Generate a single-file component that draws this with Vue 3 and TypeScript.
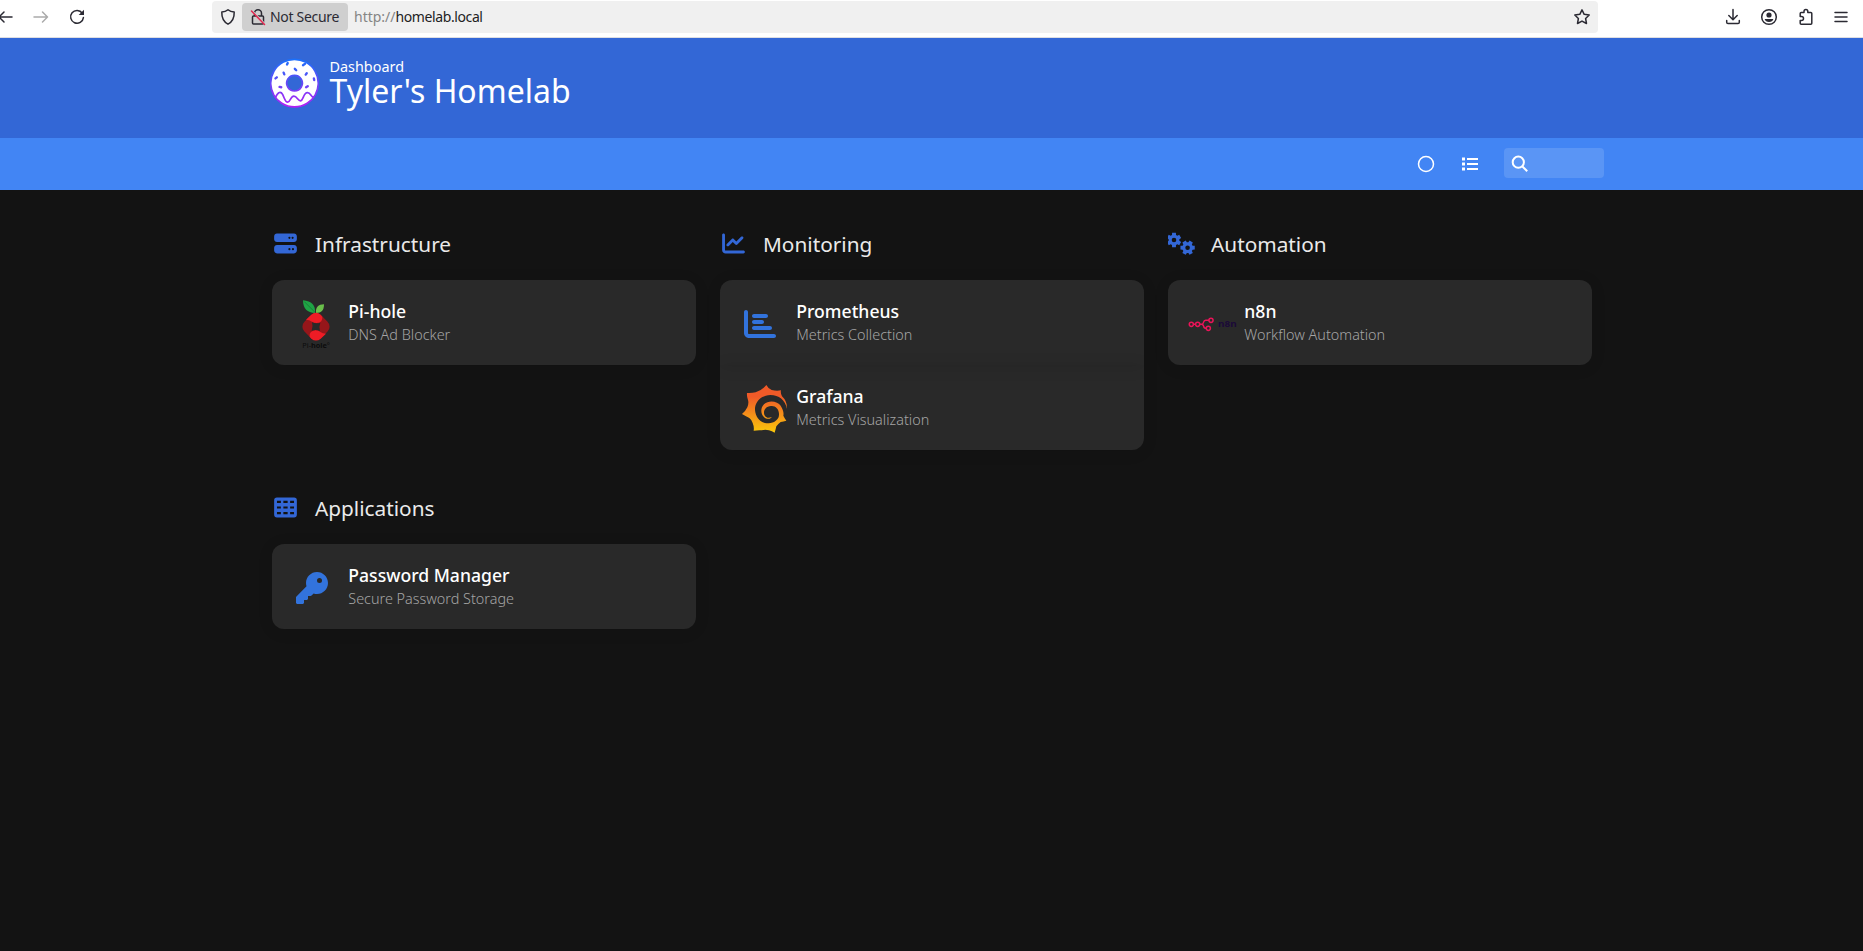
<script setup lang="ts">
interface Item {
  name: string
  subtitle: string
  icon: 'pihole' | 'bars' | 'grafana' | 'n8n' | 'key'
}
interface Group {
  title: string
  icon: 'server' | 'chart' | 'gears' | 'table'
  items: Item[]
}

const groups: Group[] = [
  { title: 'Infrastructure', icon: 'server', items: [{ name: 'Pi-hole', subtitle: 'DNS Ad Blocker', icon: 'pihole' }] },
  {
    title: 'Monitoring',
    icon: 'chart',
    items: [
      { name: 'Prometheus', subtitle: 'Metrics Collection', icon: 'bars' },
      { name: 'Grafana', subtitle: 'Metrics Visualization', icon: 'grafana' },
    ],
  },
  { title: 'Automation', icon: 'gears', items: [{ name: 'n8n', subtitle: 'Workflow Automation', icon: 'n8n' }] },
  { title: 'Applications', icon: 'table', items: [{ name: 'Password Manager', subtitle: 'Secure Password Storage', icon: 'key' }] },
]

function gear(cx: number, cy: number, offset: number): string {
  const points: string[] = []
  const at = (deg: number, r: number) => {
    const a = (deg * Math.PI) / 180
    points.push(`${(cx + r * Math.cos(a)).toFixed(2)} ${(cy + r * Math.sin(a)).toFixed(2)}`)
  }
  for (let i = 0; i < 6; i++) {
    const c = offset + i * 60
    at(c - 22, 5.4)
    at(c - 15, 7.4)
    at(c + 15, 7.4)
    at(c + 22, 5.4)
  }
  const hole = `M${cx - 2.3} ${cy}a2.3 2.3 0 1 0 4.6 0a2.3 2.3 0 1 0 -4.6 0z`
  return `M${points.join('L')}z${hole}`
}
const gearsPath = gear(6, 8, 30) + gear(19.6, 15.7, 0)
</script>

<template>
  <div class="page">
    <div class="browser">
      <svg class="back" width="13" height="20" viewBox="0 0 13 20"><path d="M12 10H-1M4 5L-1 10L4 15" /></svg>
      <svg class="forward" width="16" height="20" viewBox="0 0 16 20"><path d="M1 10H14.5M9.5 5L14.5 10L9.5 15" /></svg>
      <svg class="reload" width="18" height="20" viewBox="0 0 18 20"><path d="M14.3 6.2A6.4 6.4 0 1 0 15.4 10.6" /><path class="solid" d="M10.7 8H16V2.8z" /></svg>
      <div class="urlbar">
        <svg class="shield" width="16" height="18" viewBox="0 0 16 18"><path d="M8 1.8C6.3 3.3 4 4 1.8 4C1.6 9.5 3.3 13.6 8 16.2C12.7 13.6 14.4 9.5 14.2 4C12 4 9.7 3.3 8 1.8z" /></svg>
        <div class="chip">
          <svg width="16" height="18" viewBox="0 0 16 18"><path d="M4.5 8V5.3A3.5 3.5 0 0 1 11.5 5.3V8M3.5 8H12.5Q13.5 8 13.5 9V15Q13.5 16 12.5 16H3.5Q2.5 16 2.5 15V9Q2.5 8 3.5 8z" /><path class="halo" d="M2 2.5L15 16" /><path class="slash" d="M1.5 3L14.5 16.5" /></svg>
          <span class="chip-text">Not Secure</span>
        </div>
        <div class="url"><span class="scheme">http://</span><span class="host">homelab.local</span></div>
        <svg class="star" width="18" height="18" viewBox="0 0 18 18"><path d="M9 1.8L11.2 6.3L16.2 7L12.6 10.5L13.5 15.5L9 13.1L4.5 15.5L5.4 10.5L1.8 7L6.8 6.3z" /></svg>
      </div>
      <div class="tools">
        <svg width="16" height="18" viewBox="0 0 16 18"><path d="M8 1.5V11.5M3.8 7.5L8 11.7L12.2 7.5M1.7 12.5V14.2Q1.7 15.5 3 15.5H13Q14.3 15.5 14.3 14.2V12.5" /></svg>
        <svg width="18" height="18" viewBox="0 0 18 18"><circle cx="9" cy="9" r="7.3" /><circle class="solid" cx="9" cy="7" r="2.6" /><path class="solid" d="M4.6 11H13.4Q12.6 14 9 14Q5.4 14 4.6 11z" /></svg>
        <svg width="16" height="18" viewBox="0 0 16 18"><path d="M2.2 6.8V5.5Q2.2 4.5 3.2 4.5H6V3.4A1.9 1.9 0 0 1 9.8 3.4V4.5H12.8Q13.8 4.5 13.8 5.5V15.2Q13.8 16.2 12.8 16.2H3.2Q2.2 16.2 2.2 15.2V12.6H3.5A1.9 1.9 0 0 0 3.5 8.6H2.2z" /></svg>
        <svg class="menu" width="14" height="18" viewBox="0 0 14 18"><path d="M1 4.5H13M1 9H13M1 13.5H13" /></svg>
      </div>
    </div>

    <header class="banner">
      <div class="container banner-inner">
        <svg class="logo" width="49" height="51" viewBox="0 0 144 150">
          <defs>
            <linearGradient id="donut" x1="0" y1="0" x2="0" y2="150" gradientUnits="userSpaceOnUse"><stop offset="0" stop-color="#1672fb" /><stop offset="1" stop-color="#b81cf4" /></linearGradient>
          </defs>
          <g fill="none" stroke="url(#donut)" stroke-linecap="round">
            <path fill="#fff" fill-rule="evenodd" stroke-width="5" d="M72 4A70 70 0 1 1 71.9 4zM72 51A23 23 0 1 0 72.1 51z" />
            <path stroke-width="5" d="M16 116C24 98 32 98 37 107C45 124 45 130 52 130C60 130 60 112 70 112C80 112 82 127 90 126C98 125 98 102 110 102C120 102 121 116 128 115" />
            <path stroke-width="7" d="M52 15L50 19M97 21L103 17M73 32L77 36M40 43L42 48M105 49L108 45M16 60L20 57M129 60L130 65M28 85L33 86M106 86L111 83" />
          </g>
        </svg>
        <div class="heading">
          <span class="overline">Dashboard</span>
          <h1>Tyler's Homelab</h1>
        </div>
      </div>
    </header>

    <nav class="navbar">
      <div class="container nav-inner">
        <svg class="theme" width="18" height="18" viewBox="0 0 18 18"><circle cx="9" cy="9" r="7.5" /></svg>
        <svg class="list" width="18" height="18" viewBox="0 0 18 18"><path d="M6 4H17M6 9H17M6 14H17" /><path class="dots" d="M1 4H4M1 9H4M1 14H4" /></svg>
        <div class="search">
          <svg width="18" height="18" viewBox="0 0 18 18"><circle cx="7.3" cy="7.2" r="5.6" /><path d="M11.5 11.5L16.2 16.3" /></svg>
        </div>
      </div>
    </nav>

    <main class="container groups">
      <section v-for="group in groups" :key="group.title">
        <h2>
          <svg v-if="group.icon === 'gears'" class="group-icon" width="27" height="24" viewBox="0 0 27 24"><path fill-rule="evenodd" :d="gearsPath" /></svg>
          <svg v-else class="group-icon" width="27" height="23" viewBox="0 0 608 512">
            <g transform="translate(48 0)">
              <path v-if="group.icon === 'server'" d="M64 32C28.7 32 0 60.7 0 96v64c0 35.3 28.7 64 64 64H448c35.3 0 64-28.7 64-64V96c0-35.3-28.7-64-64-64H64zm280 72a24 24 0 1 1 0 48 24 24 0 1 1 0-48zm48 24a24 24 0 1 1 48 0 24 24 0 1 1 -48 0zM64 288c-35.3 0-64 28.7-64 64v64c0 35.3 28.7 64 64 64H448c35.3 0 64-28.7 64-64V352c0-35.3-28.7-64-64-64H64zm280 72a24 24 0 1 1 0 48 24 24 0 1 1 0-48zm56 24a24 24 0 1 1 48 0 24 24 0 1 1 -48 0z" />
              <path v-else-if="group.icon === 'chart'" d="M64 64c0-17.7-14.3-32-32-32S0 46.3 0 64V400c0 44.2 35.8 80 80 80H480c17.7 0 32-14.3 32-32s-14.3-32-32-32H80c-8.8 0-16-7.2-16-16V64zm406.6 86.6c12.5-12.5 12.5-32.8 0-45.3s-32.8-12.5-45.3 0L320 210.7l-57.4-57.4c-12.5-12.5-32.8-12.5-45.3 0l-112 112c-12.5 12.5-12.5 32.8 0 45.3s32.8 12.5 45.3 0L240 221.3l57.4 57.4c12.5 12.5 32.8 12.5 45.3 0l128-128z" />
              <path v-else fill-rule="evenodd" d="M64 32H448Q512 32 512 96V416Q512 480 448 480H64Q0 480 0 416V96Q0 32 64 32zM64 104V152H152V104zM208 104V152H304V104zM360 104V152H448V104zM64 232V280H152V232zM208 232V280H304V232zM360 232V280H448V232zM64 360V408H152V360zM208 360V408H304V360zM360 360V408H448V360z" />
            </g>
          </svg>
          <span>{{ group.title }}</span>
        </h2>
        <div class="cards">
          <a v-for="item in group.items" :key="item.name" class="card">
            <div class="media">
              <svg v-if="item.icon === 'pihole'" width="50" height="56" viewBox="0 0 150 168" class="pihole">
                <path fill="#1fa345" d="M75 54C52 54 39 41 39 16C65 18 77 31 75 54z" />
                <path fill="#6abf4b" d="M78 54C76 37 85 28 102 28C102 46 95 54 78 54z" />
                <path stroke="#176b30" stroke-width="2" fill="none" d="M43 20L75 52" />
                <rect x="43" y="60" width="70" height="70" rx="21" fill="#96161a" transform="rotate(45 78 95)" />
                <path fill="#ee1c25" d="M48 74L64 59Q78 48 92 59L97 65Q99 82 80 84Q72 84 66 80Q58 74 48 74zM108 116L92 131Q78 142 64 131L59 125Q57 108 76 106Q84 106 90 110Q98 116 108 116z" />
                <path fill="#292929" d="M66 82Q78 87 91 83Q86 95 90 108Q78 103 65 107Q70 95 66 82z" />
                <text x="37" y="158" font-size="20" textLength="83" lengthAdjust="spacingAndGlyphs" fill="#0c0c0c">Pi-<tspan font-weight="700">hole</tspan>°</text>
              </svg>
              <svg v-else-if="item.icon === 'bars'" width="32" height="32" viewBox="0 0 512 512" class="glyph">
                <path d="M32 32c17.7 0 32 14.3 32 32V400c0 8.8 7.2 16 16 16H480c17.7 0 32 14.3 32 32s-14.3 32-32 32H80c-44.2 0-80-35.8-80-80V64C0 46.3 14.3 32 32 32zm96 96c0-17.7 14.3-32 32-32l192 0c17.7 0 32 14.3 32 32s-14.3 32-32 32l-192 0c-17.7 0-32-14.3-32-32zm32 64H288c17.7 0 32 14.3 32 32s-14.3 32-32 32H160c-17.7 0-32-14.3-32-32s14.3-32 32-32zm0 96H416c17.7 0 32 14.3 32 32s-14.3 32-32 32H160c-17.7 0-32-14.3-32-32s14.3-32 32-32z" />
              </svg>
              <svg v-else-if="item.icon === 'grafana'" width="60" height="60" viewBox="0 0 180 180" class="grafana">
                <defs>
                  <linearGradient id="flame" x1="0" y1="50" x2="0" y2="160" gradientUnits="userSpaceOnUse"><stop offset="0" stop-color="#f05a28" /><stop offset="1" stop-color="#fbca0a" /></linearGradient>
                </defs>
                <path fill="url(#flame)" fill-rule="evenodd" d="M94 15Q99 25 110 30Q125 34 138 31Q136 39 141 49Q157 64 156 86Q146 46 106 45C76 46 59 68 60 90C62 116 81 131 101 130C118 129 128 119 131 111C136 89 122 76 108 78C91 79 84 93 88 104C92 114 102 115 110 111C108 118 94 119 86 110C77 102 76 84 87 73C103 58 129 65 137 77C144 88 147 98 145 107Q149 115 154 122Q145 124 137 126Q128 133 124 139Q122 149 119 158Q111 153 102 151Q90 147 81 151Q69 150 56 152Q58 141 53 129Q50 119 43 114Q33 109 21 102Q32 93 37 82Q42 70 39 60Q35 50 36 39Q50 40 62 37Q80 32 94 15z" />
              </svg>
              <svg v-else-if="item.icon === 'n8n'" width="50" height="16" viewBox="0 0 150 48" class="n8n">
                <g fill="none" stroke="#ea1459" stroke-width="4.5">
                  <circle cx="10" cy="25" r="6.2" /><circle cx="29" cy="25" r="6.2" /><circle cx="69" cy="13" r="6.2" /><circle cx="61" cy="37" r="6.2" />
                  <path d="M16 25H23M35 25H41Q44 25 46 20Q48 13 53 13H63M41 25Q46 26 47 31Q48 37 55 37" />
                </g>
                <text x="90" y="33" font-size="28" font-weight="700" textLength="56" lengthAdjust="spacingAndGlyphs" fill="#1b0a38">n8n</text>
              </svg>
              <svg v-else width="32" height="32" viewBox="0 0 512 512" class="glyph">
                <path d="M336 352c97.2 0 176-78.8 176-176S433.2 0 336 0S160 78.8 160 176c0 18.7 2.9 36.8 8.3 53.7L7 391c-4.5 4.5-7 10.6-7 17v80c0 13.3 10.7 24 24 24h80c13.3 0 24-10.7 24-24V448h40c13.3 0 24-10.7 24-24V384h40c6.4 0 12.5-2.5 17-7l33.3-33.3c16.9 5.4 35 8.3 53.7 8.3zM376 96a40 40 0 1 1 0 80 40 40 0 1 1 0-80z" />
              </svg>
            </div>
            <div class="text">
              <p class="name">{{ item.name }}</p>
              <p class="subtitle">{{ item.subtitle }}</p>
            </div>
          </a>
        </div>
      </section>
    </main>
  </div>
</template>

<style>
body {
  background: #131313;
}
</style>

<style scoped>
.page {
  height: 951px;
  overflow: hidden;
  background: #131313;
  color: #eaeaea;
  font-family: 'Noto Sans', sans-serif;
}
.page * {
  box-sizing: border-box;
}
svg {
  display: block;
  flex: none;
}
.container {
  width: 1344px;
  margin: 0 auto;
}
.browser {
  display: flex;
  height: 38px;
  padding-top: 1px;
  background: #fff;
  border-bottom: 1px solid #dedee2;
}
.browser svg {
  fill: none;
  stroke: #2b2a33;
  stroke-width: 1.5;
  stroke-linejoin: round;
  stroke-linecap: round;
}
.browser .solid {
  fill: #2b2a33;
  stroke: none;
}
.back,
.forward,
.reload {
  margin-top: 6px;
}
.browser .forward {
  margin-left: 20px;
  stroke: #aaa;
}
.reload {
  margin-left: 19px;
}
.urlbar {
  display: flex;
  align-items: center;
  width: 1386px;
  height: 32px;
  margin-left: 126px;
  border-radius: 4px;
  background: #f0f0f0;
}
.shield {
  margin-left: 8px;
}
.chip {
  display: flex;
  align-items: center;
  width: 106px;
  height: 28px;
  margin: -1px 0 0 6px;
  padding-left: 8px;
  border-radius: 4px;
  background: #cfcfcf;
  color: #2b2a33;
}
.browser .halo {
  stroke: #cfcfcf;
}
.browser .slash {
  stroke: #e22850;
}
.chip-text {
  margin-left: 4px;
  padding-bottom: 1px;
  font-size: 14px;
  letter-spacing: -0.3px;
  line-height: 19px;
  white-space: nowrap;
}
.url {
  flex: 1;
  margin-left: 6px;
  padding-bottom: 2px;
  font-size: 14px;
}
.scheme {
  color: #858585;
}
.host {
  color: #222;
  letter-spacing: -0.4px;
}
.star {
  margin-right: 7px;
}
.tools {
  display: flex;
  gap: 19.5px;
  margin: 7px 0 0 126.5px;
}
.menu {
  margin-left: 0.7px;
}
.banner {
  height: 100px;
  background: #3367d6;
}
.banner-inner {
  display: flex;
  padding: 20px 0 0 10.5px;
}
.heading {
  margin-left: 10.5px;
  color: #fff;
}
.overline {
  display: block;
  margin-top: -1px;
  font-size: 14.4px;
  line-height: 20px;
}
h1 {
  margin: -2px 0 0;
  font-size: 32px;
  font-weight: 400;
  line-height: 32px;
}
.navbar {
  height: 52px;
  background: #4285f4;
}
.nav-inner {
  display: flex;
  align-items: center;
  justify-content: flex-end;
  height: 52px;
}
.nav-inner svg {
  fill: none;
  stroke: #fff;
  stroke-width: 2;
}
.nav-inner .theme {
  margin-right: 26px;
  stroke-width: 1.5;
}
.nav-inner .list {
  margin-right: 25px;
}
.dots {
  stroke-width: 3;
}
.search {
  display: flex;
  align-items: center;
  width: 100px;
  height: 30px;
  margin-top: -2px;
  padding: 1px 0 0 7px;
  border-radius: 4px;
  background: #5a95f5;
}
.groups {
  display: grid;
  grid-template-columns: repeat(3, 424px);
  gap: 24px;
  padding: 20px 12px 0;
}
h2 {
  display: flex;
  align-items: center;
  height: 70px;
  margin: 0;
  padding-bottom: 3px;
  font-size: 20.8px;
  font-weight: 400;
}
h2 span {
  margin-left: 16.5px;
}
.group-icon {
  fill: #3367d6;
}
.cards {
  overflow: hidden;
  border-radius: 12px;
  background: #292929;
  box-shadow: 0 2px 15px rgba(0, 0, 0, 0.1);
}
.card {
  display: flex;
  align-items: center;
  height: 85px;
  box-shadow: 0 2px 15px rgba(0, 0, 0, 0.1);
}
.media {
  display: flex;
  align-items: center;
  width: 76.8px;
  height: 85px;
}
.glyph {
  margin: 3px 0 0 24px;
  fill: #3273dc;
}
.pihole {
  margin: 0 0 0 18.5px;
}
.grafana {
  margin: 5px 0 0 15px;
}
.n8n {
  margin: 3px 0 0 20px;
}
.text {
  padding-top: 1px;
  line-height: 24px;
}
.name,
.subtitle {
  margin: 0;
  white-space: nowrap;
}
.name {
  color: #fff;
  font-size: 17.6px;
  font-weight: 500;
}
.subtitle {
  color: #a5a5a5;
  font-size: 14.4px;
  font-weight: 300;
  line-height: 24px;
}
</style>
